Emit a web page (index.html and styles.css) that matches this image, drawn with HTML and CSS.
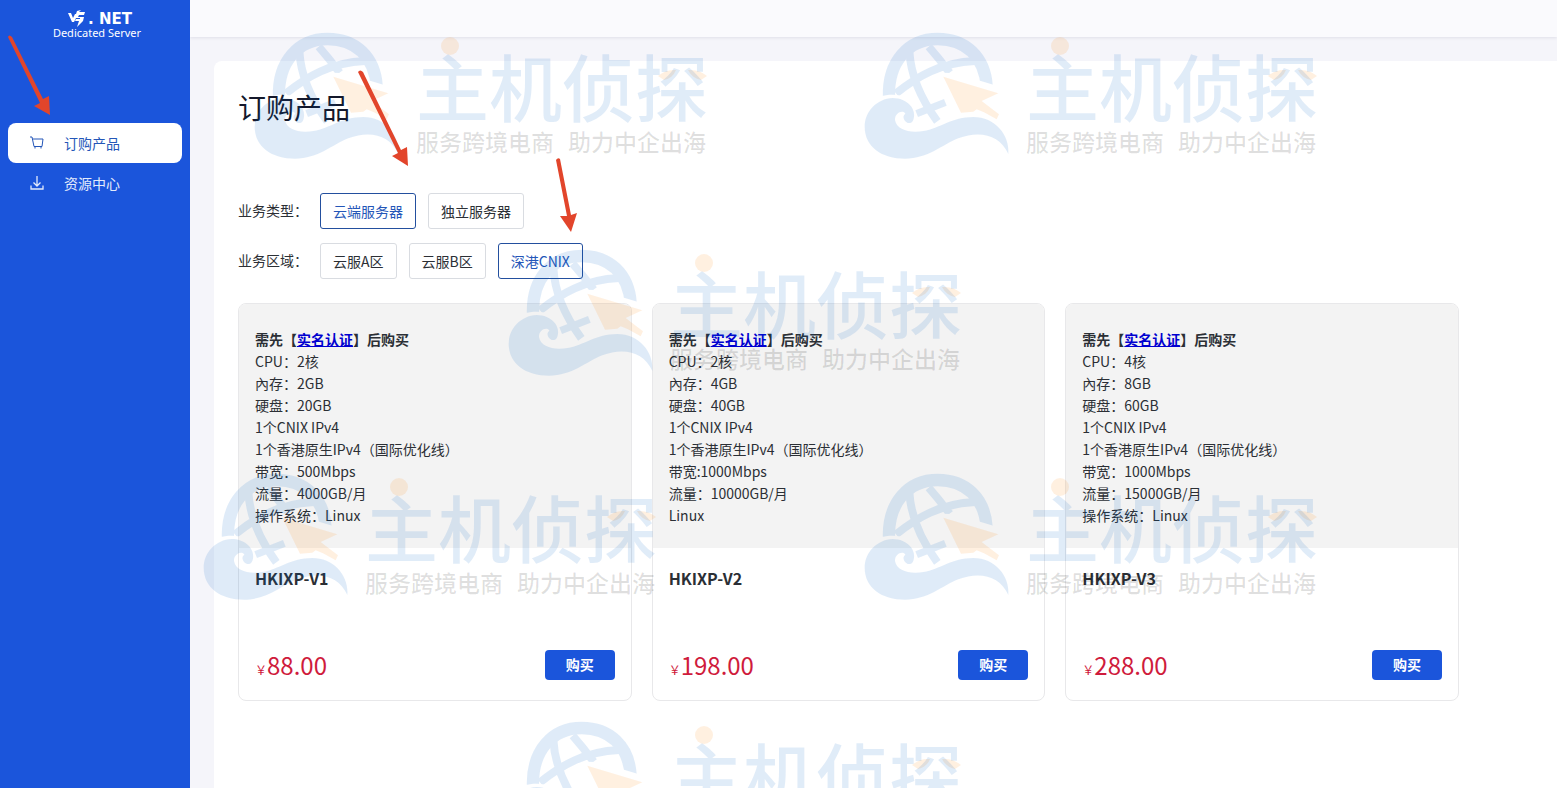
FILE: index.html
```html
<!DOCTYPE html>
<html lang="zh-CN">
<head>
<meta charset="utf-8">
<title>订购产品</title>
<link rel="stylesheet" href="styles.css">
</head>
<body>
<div class="app">
  <aside class="sidebar">
    <div class="brand">
      <div class="brand-row">
        <svg class="brand-mark" viewBox="0 0 18 18" aria-hidden="true"><path d="M0 3h3l2 5 2-4h3L6 12H4zM9 1l4-1-2 2h6l-1 3h-5l-1 2h6l-1 4-6 6 2-6H7l1-2h4V8H7l1-4z"/></svg>
        <span class="brand-name">. NET</span>
      </div>
      <div class="brand-sub">Dedicated Server</div>
    </div>
    <nav class="menu">
      <a class="menu-item active" href="#order">
        <svg class="menu-icon" viewBox="0 0 14 14" aria-hidden="true"><path d="M0 1h2l2 9.500h8L13 3H2.600M5 11v1.500M11 11v1.500"/></svg>
        <span>订购产品</span>
      </a>
      <a class="menu-item" href="#resources">
        <svg class="menu-icon" viewBox="0 0 14 14" aria-hidden="true"><path stroke-width="1.300" d="M7 0v10M3.500 6.500 7 10l3.500-3.500M1 9.500V13h12V9.500"/></svg>
        <span>资源中心</span>
      </a>
    </nav>
  </aside>
  <div class="content">
    <header class="topbar"></header>
    <main class="panel">
      <h1 class="title">订购产品</h1>
      <div class="filters">
        <div class="filter" role="group" aria-labelledby="type-label">
          <span class="filter-label" id="type-label">业务类型：</span>
          <button class="option selected" type="button">云端服务器</button>
          <button class="option" type="button">独立服务器</button>
        </div>
        <div class="filter" role="group" aria-labelledby="area-label">
          <span class="filter-label" id="area-label">业务区域：</span>
          <button class="option" type="button">云服A区</button>
          <button class="option" type="button">云服B区</button>
          <button class="option selected" type="button">深港CNIX</button>
        </div>
      </div>
      <div class="cards">
        <article class="card">
          <div class="specs">
            <p class="notice">需先【<a href="#verify">实名认证</a>】后购买</p>
            <p>CPU：2核</p>
            <p>內存：2GB</p>
            <p>硬盘：20GB</p>
            <p>1个CNIX IPv4</p>
            <p>1个香港原生IPv4（国际优化线）</p>
            <p>带宽：500Mbps</p>
            <p>流量：4000GB/月</p>
            <p>操作系统：Linux</p>
          </div>
          <div class="card-body">
            <h2 class="name">HKIXP-V1</h2>
            <div class="buy-row"><div class="price"><span class="currency">￥</span><span>88.00</span></div><button class="buy" type="button">购买</button></div>
          </div>
        </article>
        <article class="card">
          <div class="specs">
            <p class="notice">需先【<a href="#verify">实名认证</a>】后购买</p>
            <p>CPU：2核</p>
            <p>內存：4GB</p>
            <p>硬盘：40GB</p>
            <p>1个CNIX IPv4</p>
            <p>1个香港原生IPv4（国际优化线）</p>
            <p>带宽:1000Mbps</p>
            <p>流量：10000GB/月</p>
            <p>Linux</p>
          </div>
          <div class="card-body">
            <h2 class="name">HKIXP-V2</h2>
            <div class="buy-row"><div class="price"><span class="currency">￥</span><span>198.00</span></div><button class="buy" type="button">购买</button></div>
          </div>
        </article>
        <article class="card">
          <div class="specs">
            <p class="notice">需先【<a href="#verify">实名认证</a>】后购买</p>
            <p>CPU：4核</p>
            <p>內存：8GB</p>
            <p>硬盘：60GB</p>
            <p>1个CNIX IPv4</p>
            <p>1个香港原生IPv4（国际优化线）</p>
            <p>带宽：1000Mbps</p>
            <p>流量：15000GB/月</p>
            <p>操作系统：Linux</p>
          </div>
          <div class="card-body">
            <h2 class="name">HKIXP-V3</h2>
            <div class="buy-row"><div class="price"><span class="currency">￥</span><span>288.00</span></div><button class="buy" type="button">购买</button></div>
          </div>
        </article>
      </div>
    </main>
  </div>
</div>

<svg class="overlay" aria-hidden="true">
  <defs>
    <mask id="gap" maskUnits="userSpaceOnUse" x="30" y="20" width="470" height="420">
      <rect x="30" y="20" width="470" height="420" fill="#fff"/>
      <path fill="#000" d="M272 158 300 159 350 170 460 203V230L280 175ZM90 229C120 222 150 222 172 235V250H90Z"/>
    </mask>
    <g id="watermark">
      <g transform="scale(.33333) translate(-42 -36)">
        <g class="wm-blue">
          <g class="wm-globe" mask="url(#gap)">
            <path stroke-width="37" d="M117 232C113 125 175 57 263 57C345 57 405 110 410 200"/>
            <path stroke-width="24" d="M178 92C182 170 215 240 262 304M236 80C258 105 278 130 299 158M138 220C200 170 270 128 375 123"/>
            <path stroke-width="22" d="M200 281 286 247"/>
          </g>
          <path d="M190 300C202 268 172 234 128 234C80 236 44 275 44 320C44 380 95 416 165 416C235 416 275 375 325 355C390 330 450 345 475 402C480 345 435 291 370 291C305 291 270 325 220 333C180 340 140 330 135 300C134 280 158 268 166 281C148 293 178 325 190 300Z"/>
        </g>
        <path class="wm-orange" d="M280 170 445 220 395 243 447 283 440 298 402 277 380 268 370 275 333 278Z"/>
      </g>
      <circle class="wm-orange" cx="196" cy="14" r="9"/>
      <path class="wm-orange" d="M404 44Q412 37 422 38Q419 46 410 48ZM453 44Q445 37 434 38Q438 46 447 48Z"/>
      <text class="wm-name" x="162" y="84">主机侦探</text>
      <text class="wm-slogan" y="119"><tspan x="162">服务跨境电商</tspan> <tspan x="314">助力中企出海</tspan></text>
    </g>
  </defs>
  <use href="#watermark" x="254" y="32"/>
  <use href="#watermark" x="864" y="32"/>
  <use href="#watermark" x="508" y="249"/>
  <use href="#watermark" x="203" y="473"/>
  <use href="#watermark" x="864" y="473"/>
  <use href="#watermark" x="508" y="721"/>
  <g class="arrows">
    <path d="M8 37Q9 34 12 37L43 99 49 96 50 115 34 106 40 103Z"/>
    <path d="M358 72Q360 69 363 72L401 150 407 147 408 166 392 156 398 153Z"/>
    <path d="M556 160Q558 157 560 159L571 215 577 213 571 232 560 216 567 216Z"/>
  </g>
</svg>
</body>
</html>
```
FILE: styles.css
```css
* { box-sizing: border-box; }

body {
  margin: 0;
  font-family: "Noto Sans CJK SC", sans-serif;
  font-size: 14px;
  line-height: 22px;
  color: #2b2f35;
  background: #f5f5fa;
}

h1, h2, p { margin: 0; }

button { font: inherit; cursor: pointer; }

.app {
  display: flex;
  min-height: 100vh;
}

.sidebar {
  position: relative;
  z-index: 1;
  width: 190px;
  flex: none;
  padding: 10px 8px;
  background: #1b55db;
}

.brand {
  display: flex;
  flex-direction: column;
  align-items: center;
  height: 113px;
  padding-left: 4px;
  color: #fff;
}

.brand-row {
  display: flex;
  align-items: center;
  gap: 2px;
  height: 18px;
  padding-left: 6px;
}

.brand-mark {
  width: 18px;
  height: 18px;
  fill: #fff;
}

.brand-name {
  font: bold 15px/22px "DejaVu Sans", sans-serif;
}

.brand-sub {
  font: 11px/10px "Noto Sans", sans-serif;
}

.menu-item {
  display: flex;
  align-items: center;
  gap: 20px;
  height: 40px;
  padding-left: 22px;
  border-radius: 8px;
  color: #e3ebfc;
  text-decoration: none;
}

.menu-item.active {
  background: #fff;
  color: #2456b8;
}

.menu-icon {
  width: 14px;
  height: 14px;
  fill: none;
  stroke: currentColor;
}

.content {
  flex: 1;
  min-width: 0;
  display: flex;
  flex-direction: column;
}

.topbar {
  height: 37px;
  background: #fafafd;
  box-shadow: 0 1px 3px #dfdfe8;
}

.panel {
  flex: 1;
  margin: 24px 0 0 24px;
  padding: 24px;
  background: #fff;
  border-top-left-radius: 8px;
}

.title {
  font-size: 28px;
  line-height: 44px;
  font-weight: 400;
  color: #14182b;
}

.filters {
  display: flex;
  flex-direction: column;
  gap: 14px;
  margin: 64px 0 24px;
}

.filter {
  display: flex;
  align-items: center;
  gap: 12px;
}

.filter-label {
  width: 70px;
  padding-bottom: 2px;
}

.option {
  height: 36px;
  padding: 0 12px;
  border: 1px solid #d9dce1;
  border-radius: 3px;
  background: #fff;
  color: #2b2f35;
}

.option.selected {
  border-color: #234f9e;
  color: #2456b8;
}

.cards {
  display: grid;
  grid-template-columns: repeat(3, 1fr);
  gap: 20px;
  margin-right: 74px;
}

.card {
  overflow: hidden;
  border: 1px solid #e8e8ea;
  border-radius: 8px;
}

.specs {
  padding: 24px 16px 22px;
  background: #f3f3f3;
}

.notice { font-weight: 700; }

.notice a { color: #0000d0; }

.card-body { padding: 18px 16px 20px; }

.name {
  font-size: 16px;
  line-height: 24px;
  font-weight: 700;
}

.buy-row {
  display: flex;
  align-items: center;
  justify-content: space-between;
  margin-top: 60px;
}

.price {
  display: flex;
  align-items: baseline;
  height: 30px;
  font-size: 24px;
  line-height: 30px;
  color: #cf1b3c;
}

.currency {
  font-size: 12px;
}

.buy {
  width: 70px;
  height: 30px;
  padding: 0 0 2px;
  border: 0;
  border-radius: 4px;
  background: #1b55db;
  color: #fff;
  font-weight: 700;
}

.overlay {
  position: absolute;
  inset: 0;
  z-index: 2;
  width: 100%;
  height: 100%;
  pointer-events: none;
}

.wm-blue {
  fill: #0064c8;
  opacity: .12;
}

.wm-globe {
  fill: none;
  stroke: #0064c8;
}

.wm-orange { fill: rgb(255 128 0 / 12%); }

.wm-name {
  font-size: 73px;
  font-weight: 500;
  fill: rgb(0 100 200 / 12%);
}

.wm-slogan {
  font-size: 23px;
  font-weight: 500;
  fill: rgb(0 0 0 / 12%);
}

.arrows { fill: #e2452b; }
```
